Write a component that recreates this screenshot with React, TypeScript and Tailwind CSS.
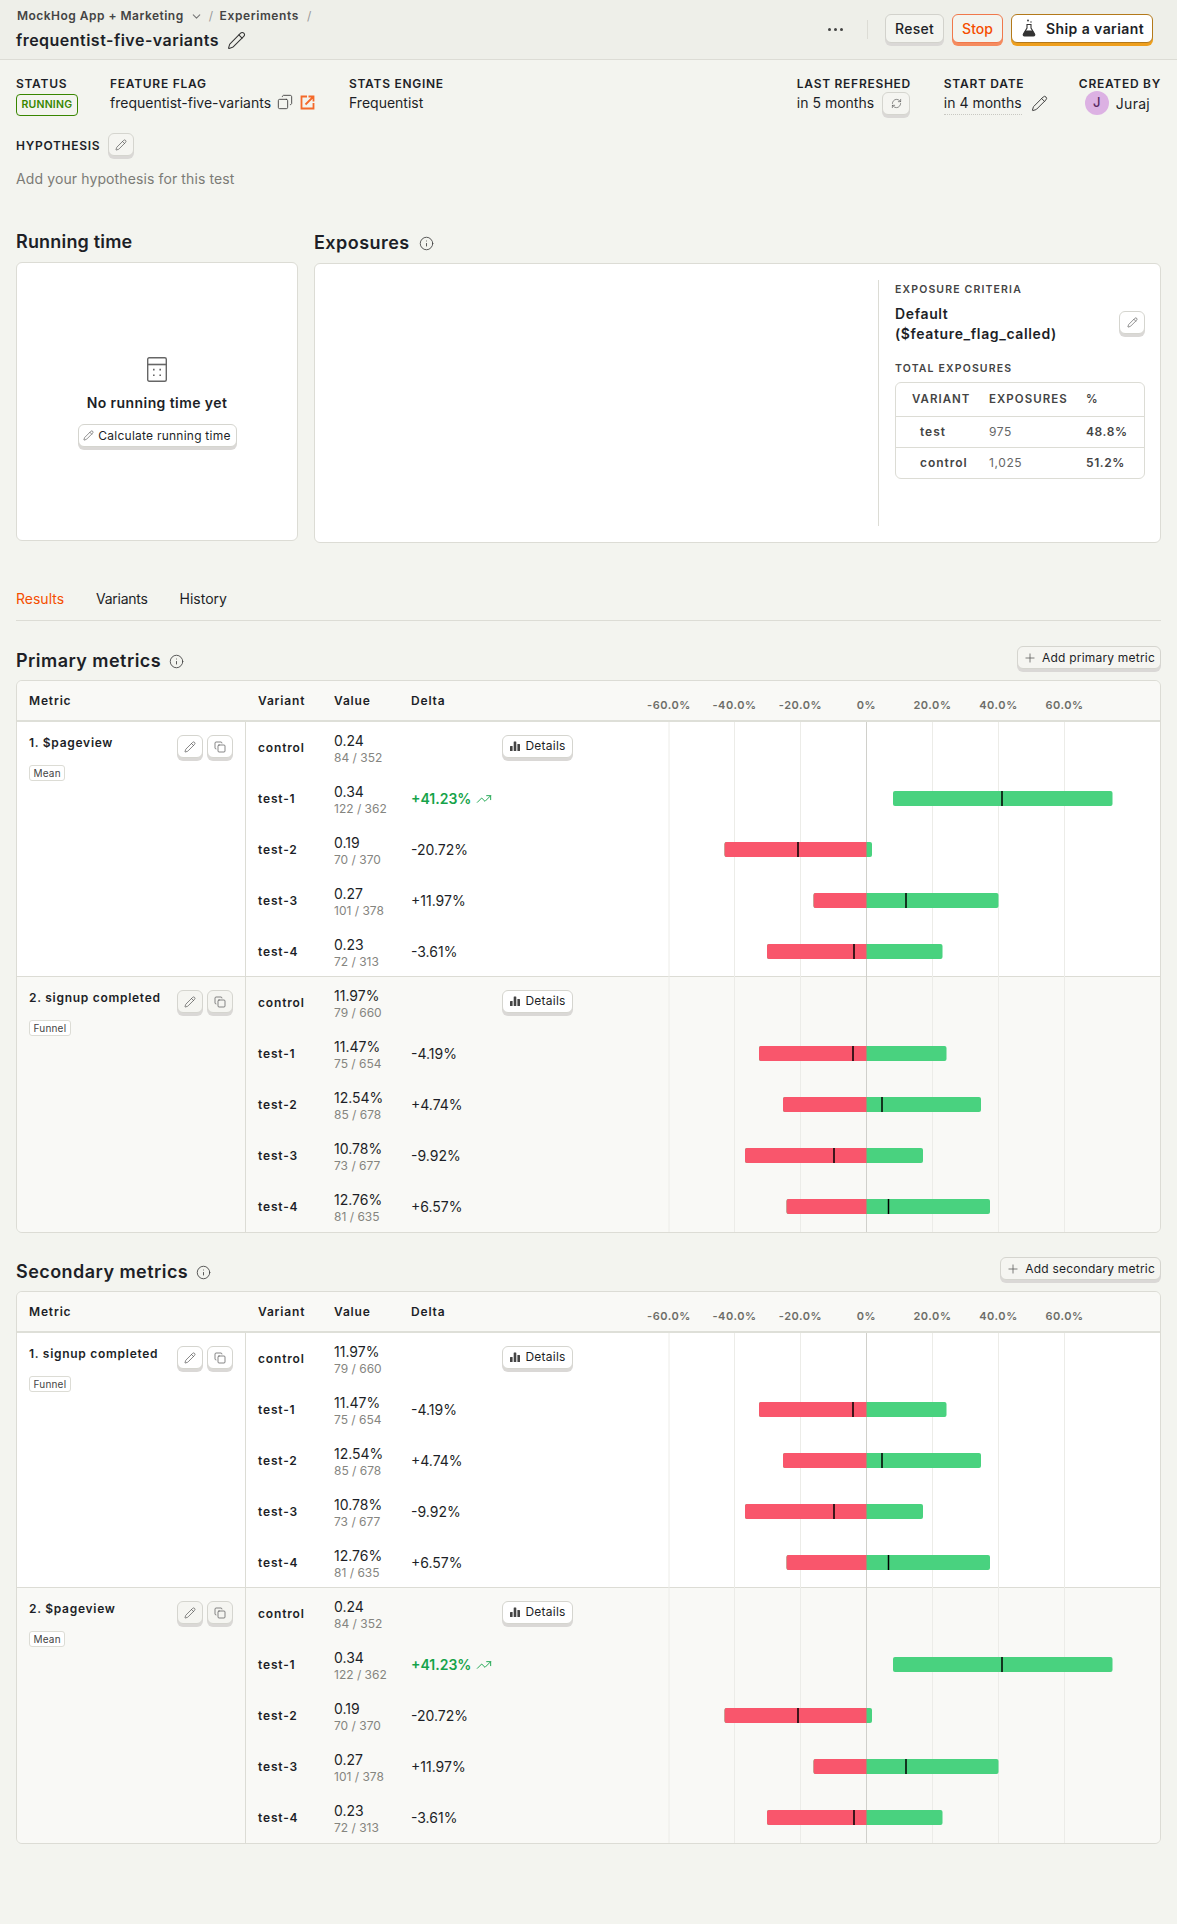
import { ChevronDown, Copy, Info, Pencil, Plus, RefreshCw, TrendingUp } from "lucide-react";

type Row = { name: string; value: string; count: string; delta?: string; win?: boolean; low?: number; high?: number; mark?: number };
type Group = { title: string; kind: string; rows: Row[]; tint?: boolean };

const pageview: Row[] = [
  { name: "control", value: "0.24", count: "84 / 352" },
  { name: "test-1", value: "0.34", count: "122 / 362", delta: "+41.23%", win: true, low: 293, high: 512.5, mark: 402 },
  { name: "test-2", value: "0.19", count: "70 / 370", delta: "-20.72%", low: 124.5, high: 272, mark: 198 },
  { name: "test-3", value: "0.27", count: "101 / 378", delta: "+11.97%", low: 213.5, high: 398.5, mark: 306 },
  { name: "test-4", value: "0.23", count: "72 / 313", delta: "-3.61%", low: 167, high: 342.5, mark: 254 },
];

const signup: Row[] = [
  { name: "control", value: "11.97%", count: "79 / 660" },
  { name: "test-1", value: "11.47%", count: "75 / 654", delta: "-4.19%", low: 159, high: 346.5, mark: 253 },
  { name: "test-2", value: "12.54%", count: "85 / 678", delta: "+4.74%", low: 183, high: 381, mark: 282 },
  { name: "test-3", value: "10.78%", count: "73 / 677", delta: "-9.92%", low: 145, high: 323, mark: 234 },
  { name: "test-4", value: "12.76%", count: "81 / 635", delta: "+6.57%", low: 186.5, high: 390, mark: 288.5 },
];

const primary: Group[] = [
  { title: "1. $pageview", kind: "Mean", rows: pageview },
  { title: "2. signup completed", kind: "Funnel", rows: signup, tint: true },
];

const secondary: Group[] = [
  { title: "1. signup completed", kind: "Funnel", rows: signup },
  { title: "2. $pageview", kind: "Mean", rows: pageview, tint: true },
];

const ticks = [
  { x: 69, label: "-60.0%" },
  { x: 134.5, label: "-40.0%" },
  { x: 200.5, label: "-20.0%" },
  { x: 266.5, label: "0%" },
  { x: 332.5, label: "20.0%" },
  { x: 398.5, label: "40.0%" },
  { x: 464.5, label: "60.0%" },
];

const ZERO = 266.5;

const softButton =
  "flex items-center justify-center rounded-md border border-[#d5d5cf] shadow-[0_3px_0_#dad8d6] mb-[3px]";

function IconButton({ children, white }: { children: React.ReactNode; white?: boolean }) {
  return (
    <button className={`${softButton} w-[26px] h-[23px] ${white ? "bg-white" : "bg-[#f5f5f1]"} text-[#555]`}>
      {children}
    </button>
  );
}

function Label({ children }: { children: React.ReactNode }) {
  return <div className="text-[12px] leading-[16px] font-semibold tracking-[0.06em] uppercase text-[#1d1f27]">{children}</div>;
}

function BarIcon() {
  return (
    <svg width="12" height="12" viewBox="0 0 12 12" fill="#444">
      <rect x="1" y="6" width="2.6" height="5" rx="0.5" />
      <rect x="4.7" y="1.5" width="2.6" height="9.5" rx="0.5" />
      <rect x="8.4" y="4" width="2.6" height="7" rx="0.5" />
    </svg>
  );
}

function Chart({ rows }: { rows: Row[] }) {
  return (
    <svg width="560" height="255" viewBox="0 0 560 255" className="shrink-0 block">
      {ticks.map((t) => (
        <line key={t.x} x1={t.x} x2={t.x} y1="0" y2="255" stroke={t.x === ZERO ? "#d0d0cb" : "#ecece8"} strokeWidth="1" />
      ))}
      {rows.map((r, i) => {
        if (r.low === undefined || r.high === undefined || r.mark === undefined) return null;
        const y = 51 * i + 18;
        const end = Math.min(r.high, ZERO);
        return (
          <g key={r.name}>
            <rect x={r.low} y={y} width={r.high - r.low} height="15" rx="2" fill="#49d27f" />
            {r.low < ZERO && <path d={`M${end} ${y}H${r.low + 2}a2 2 0 0 0-2 2V${y + 13}a2 2 0 0 0 2 2H${end}Z`} fill="#f9566c" />}
            <rect x={r.mark - 0.75} y={y} width="1.5" height="15" fill="#000" />
          </g>
        );
      })}
    </svg>
  );
}

function MetricGroup({ group, last }: { group: Group; last?: boolean }) {
  return (
    <div className={`flex h-[255px] ${group.tint ? "bg-[#f9f9f6]" : "bg-white"} ${last ? "" : "border-b border-[#dcdcd5]"}`}>
      <div className="w-[229px] shrink-0 border-r border-[#dcdcd5] pl-3 pr-3 pt-[13px]">
        <div className="flex justify-between">
          <div className="text-[12px] leading-[16px] font-semibold tracking-[0.06em] text-[#1d1f27]">{group.title}</div>
          <div className="flex gap-1">
            <IconButton white={!group.tint}>
              <Pencil size={12} strokeWidth={1.4} />
            </IconButton>
            <IconButton white={!group.tint}>
              <Copy size={12} strokeWidth={1.4} />
            </IconButton>
          </div>
        </div>
        <div className="mt-[4px] w-fit rounded-[3px] border border-[#dcdcd5] bg-white px-[3.5px] text-[10px] leading-[14px] tracking-[0.02em] text-[#444]">
          {group.kind}
        </div>
      </div>
      <div className="flex-1 min-w-0">
        {group.rows.map((r) => (
          <div key={r.name} className="flex items-center h-[51px]">
            <div className="w-[88px] pl-3 text-[12px] font-semibold tracking-[0.07em] text-[#1d1f27]">{r.name}</div>
            <div className="w-[77px] pt-[3px]">
              <div className="text-[14px] leading-[17px] text-[#1d1f27]">{r.value}</div>
              <div className="text-[12px] leading-[17px] text-[#85857f]">{r.count}</div>
            </div>
            {r.delta ? (
              <div className={`flex items-center gap-[5px] text-[14px] ${r.win ? "font-semibold text-[#16a34a]" : "text-[#1d1f27]"}`}>
                {r.delta}
                {r.win && <TrendingUp size={16} strokeWidth={1.4} />}
              </div>
            ) : (
              <button className={`${softButton} ml-[91px] w-[71px] h-[23px] gap-1 bg-white text-[12px] tracking-[0.02em] text-[#1d1f27]`}>
                <BarIcon />
                Details
              </button>
            )}
          </div>
        ))}
      </div>
      <Chart rows={group.rows} />
    </div>
  );
}

function MetricTable({ groups }: { groups: Group[] }) {
  return (
    <div className="rounded-md border border-[#dcdcd5] overflow-hidden">
      <div className="flex h-[41px] bg-[#f9f9f6] border-b-2 border-[#dedfd8] text-[12px] font-semibold tracking-[0.07em] text-[#1d1f27]">
        <div className="w-[229px] shrink-0 pl-3 pt-[11px]">Metric</div>
        <div className="w-[88px] pl-3 pt-[11px]">Variant</div>
        <div className="w-[77px] pt-[11px]">Value</div>
        <div className="w-[189px] pt-[11px]">Delta</div>
        <svg width="560" height="39" viewBox="0 0 560 39" className="shrink-0">
          {ticks.map((t) => (
            <text key={t.x} x={t.x} y="28" textAnchor="middle" className="fill-[#6d6d68] text-[11px] font-semibold tracking-[0.05em]">
              {t.label}
            </text>
          ))}
        </svg>
      </div>
      {groups.map((g, i) => (
        <MetricGroup key={g.title} group={g} last={i === groups.length - 1} />
      ))}
    </div>
  );
}

function SectionTitle({ title, action }: { title: string; action: string }) {
  return (
    <div className="flex items-center justify-between h-[26px] mb-2">
      <div className="flex items-center gap-2 pt-[2px]">
        <h2 className="text-[18px] font-semibold tracking-[0.025em] text-[#1d1f27]">{title}</h2>
        <Info size={15} strokeWidth={1.4} className="text-[#444] mt-[2px]" />
      </div>
      <button className={`${softButton} h-[23px] gap-[5px] px-[5px] bg-[#f5f5f1] text-[12px] tracking-[0.017em] text-[#1d1f27]`}>
        <Plus size={14} strokeWidth={1.3} className="text-[#555]" />
        {action}
      </button>
    </div>
  );
}

export default function App() {
  return (
    <div className="min-h-[1924px] bg-[#f3f4ef] font-[family-name:Inter,sans-serif] text-[#1d1f27]">
      <header className="flex justify-between h-[60px] bg-[#eeefe9] border-b border-[#dcdcd5] px-4">
        <div className="pt-[8px]">
          <div className="flex items-center text-[12px] leading-[16px] font-semibold tracking-[0.05em] text-[#444]">
            <span className="ml-px tracking-[0.04em]">MockHog App + Marketing</span>
            <ChevronDown size={13} className="ml-[6px] text-[#777]" />
            <span className="mx-[6px] font-normal text-[#999]">/</span>
            <span>Experiments</span>
            <span className="ml-[8px] font-normal text-[#999]">/</span>
          </div>
          <div className="flex items-center gap-2 mt-[6px]">
            <span className="text-[16px] leading-[20px] font-semibold tracking-[0.03em]">frequentist-five-variants</span>
            <Pencil size={19} strokeWidth={1.3} className="text-[#333]" />
          </div>
        </div>
        <div className="flex items-center mr-2">
          <div className="flex gap-[3px] mr-[24px]">
            <span className="w-[3px] h-[3px] rounded-full bg-[#444]" />
            <span className="w-[3px] h-[3px] rounded-full bg-[#444]" />
            <span className="w-[3px] h-[3px] rounded-full bg-[#444]" />
          </div>
          <div className="w-px h-[19px] bg-[#dcdcd5] mr-[17px]" />
          <button className="h-[29px] w-[59px] mb-[3px] rounded-md border border-[#d2d2cc] bg-[#f3f4ef] shadow-[0_3px_0_#dad8d6] text-[14px] font-medium tracking-[0.02em]">
            Reset
          </button>
          <button className="h-[29px] w-[51px] ml-2 mb-[3px] rounded-md border border-[#f0784b] bg-[#f3f4ef] shadow-[0_3px_0_#f58b5e] text-[14px] font-medium text-[#f54e00]">
            Stop
          </button>
          <button className="flex items-center h-[29px] w-[142px] ml-2 mb-[3px] pl-[9px] rounded-md border border-[#b3791a] bg-white shadow-[0_3px_0_#ee9f1d] text-[14px] font-semibold tracking-[0.03em]">
            <svg width="16" height="18" viewBox="0 0 16 18" className="mr-[9px] shrink-0">
              <circle cx="7" cy="1.5" r="0.9" fill="#333" />
              <circle cx="10" cy="3" r="0.7" fill="#333" />
              <path d="M6 5.5h4v3.5l3.6 6a1.3 1.3 0 0 1-1.1 2h-9a1.3 1.3 0 0 1-1.1-2l3.6-6z" fill="none" stroke="#333" strokeWidth="1.1" />
              <path d="M4.3 11.5h7.4l2 3.5a1.3 1.3 0 0 1-1.2 2h-9a1.3 1.3 0 0 1-1.2-2z" fill="#333" />
            </svg>
            Ship a variant
          </button>
        </div>
      </header>

      <main className="px-4">
        <div className="flex justify-between pt-[16px]">
          <div className="flex">
            <div className="w-[94px]">
              <Label>Status</Label>
              <div className="mt-[2px] w-fit rounded-[4px] border border-[#388600] px-[4.5px] text-[10.5px] leading-[20px] font-semibold tracking-[0.02em] text-[#388600]">
                RUNNING
              </div>
            </div>
            <div className="w-[239px]">
              <Label>Feature flag</Label>
              <div className="flex items-center h-[20px] text-[14px]">
                frequentist-five-variants
                <Copy size={16} strokeWidth={1.4} className="ml-[6px] text-[#444] -scale-x-100" />
                <svg width="15" height="15" viewBox="0 0 15 15" className="ml-[7px]" fill="none" stroke="#f4692a" strokeWidth="1.8">
                  <path d="M7 1.5H1.5v12h12V8" />
                  <path d="M5.5 9.5 13 2M8.5 1.5h5v5" />
                </svg>
              </div>
            </div>
            <div>
              <Label>Stats engine</Label>
              <div className="mt-[1px] text-[14px] leading-[20px]">Frequentist</div>
            </div>
          </div>
          <div className="flex">
            <div className="w-[147px]">
              <Label>Last refreshed</Label>
              <div className="flex items-start text-[14px] leading-[20px]">
                <span className="mt-px">in 5 months</span>
                <button className={`${softButton} ml-[8px] w-[28px] h-[23px] bg-[#f5f5f1] text-[#555]`}>
                  <RefreshCw size={11} strokeWidth={1.4} />
                </button>
              </div>
            </div>
            <div className="w-[135px]">
              <Label>Start date</Label>
              <div className="flex items-start mt-[1px] text-[14px] leading-[20px]">
                <span className="border-b border-dotted border-[#c8c8c2] pb-[1px]">in 4 months</span>
                <Pencil size={17} strokeWidth={1.3} className="ml-[9px] mt-[2px] text-[#333]" />
              </div>
            </div>
            <div>
              <Label>Created by</Label>
              <div className="flex items-center ml-[6px] -mt-px gap-[7px] text-[14px] tracking-[0.02em]">
                <span className="flex items-center justify-center w-[24px] h-[24px] rounded-full bg-[#dcb1e3] text-[13px] font-medium text-[#5a2a63]">
                  J
                </span>
                Juraj
              </div>
            </div>
          </div>
        </div>

        <div className="flex items-center gap-[8px] mt-[15px]">
          <Label>Hypothesis</Label>
          <IconButton>
            <Pencil size={12} strokeWidth={1.4} />
          </IconButton>
        </div>
        <p className="mt-[10px] text-[14px] leading-[20px] tracking-[0.008em] text-[#7b7b76]">Add your hypothesis for this test</p>

        <div className="flex gap-4 mt-[39px]">
          <div className="w-[282px] shrink-0">
            <h2 className="text-[18px] leading-[28px] font-semibold tracking-[0.01em]">Running time</h2>
            <div className="flex flex-col items-center mt-[6px] h-[279px] rounded-md border border-[#dcdcd5] bg-white pt-[94px]">
              <svg width="20" height="25" viewBox="0 0 20 25" fill="none" stroke="#666" strokeWidth="1.4">
                <rect x="0.7" y="0.7" width="18.6" height="23.6" rx="1.5" />
                <path d="M0.7 7.5h18.6" strokeWidth="1.6" />
                <path d="M6 12.6h1.6M12.4 12.6h1.6M6 18.2h1.6M12.4 18.2h1.6" strokeWidth="1.6" />
              </svg>
              <div className="mt-[11px] text-[14px] leading-[20px] font-semibold tracking-[0.03em]">No running time yet</div>
              <button className={`${softButton} mt-[11px] w-[159px] h-[23px] gap-[4px] bg-white text-[12px] tracking-[0.02em]`}>
                <Pencil size={11} strokeWidth={1.4} className="text-[#555]" />
                Calculate running time
              </button>
            </div>
          </div>
          <div className="flex-1 min-w-0">
            <div className="flex items-center gap-[9px] h-[28px]">
              <h2 className="text-[18px] font-semibold tracking-[0.025em]">Exposures</h2>
              <Info size={15} strokeWidth={1.4} className="text-[#444] mt-[2px]" />
            </div>
            <div className="flex justify-end mt-[7px] h-[280px] rounded-md border border-[#dcdcd5] bg-white py-4 pr-[15px]">
              <div className="w-[267px] border-l border-[#dcdcd5] pl-[16px]">
                <div className="mt-[2px] text-[10.5px] leading-[16px] font-semibold tracking-[0.11em] text-[#444]">EXPOSURE CRITERIA</div>
                <div className="flex items-center justify-between mt-[6px]">
                  <div className="text-[14px] leading-[20px] font-semibold tracking-[0.045em]">
                    Default
                    <br />
                    ($feature_flag_called)
                  </div>
                  <IconButton white>
                    <Pencil size={11} strokeWidth={1.4} />
                  </IconButton>
                </div>
                <div className="mt-[17px] text-[10.5px] leading-[16px] font-semibold tracking-[0.11em] text-[#444]">TOTAL EXPOSURES</div>
                <div className="mt-[5px] rounded-md border border-[#dcdcd5] text-[12px] tracking-[0.05em]">
                  <div className="flex items-center h-[34px] border-b border-[#dcdcd5] text-[11.5px] font-semibold tracking-[0.09em] text-[#444]">
                    <span className="w-[93px] pl-[16px] uppercase">Variant</span>
                    <span className="w-[97px] uppercase">Exposures</span>
                    <span>%</span>
                  </div>
                  <div className="flex items-center h-[31px] border-b border-[#dcdcd5]">
                    <span className="w-[93px] pl-[24px] font-semibold tracking-[0.08em] text-[#444]">test</span>
                    <span className="w-[97px] text-[#666]">975</span>
                    <span className="font-semibold text-[#444]">48.8%</span>
                  </div>
                  <div className="flex items-center h-[30px]">
                    <span className="w-[93px] pl-[24px] font-semibold tracking-[0.08em] text-[#444]">control</span>
                    <span className="w-[97px] text-[#666]">1,025</span>
                    <span className="font-semibold text-[#444]">51.2%</span>
                  </div>
                </div>
              </div>
            </div>
          </div>
        </div>

        <div className="flex gap-8 mt-[31px] h-[47px] pt-[15px] border-b border-[#dcdcd5] text-[14px] leading-[20px]">
          <span className="text-[#f54e00]">Results</span>
          <span className="tracking-[-0.02em]">Variants</span>
          <span>History</span>
        </div>

        <div className="mt-[25px]">
          <SectionTitle title="Primary metrics" action="Add primary metric" />
          <MetricTable groups={primary} />
        </div>
        <div className="mt-[24px]">
          <SectionTitle title="Secondary metrics" action="Add secondary metric" />
          <MetricTable groups={secondary} />
        </div>
      </main>
    </div>
  );
}
